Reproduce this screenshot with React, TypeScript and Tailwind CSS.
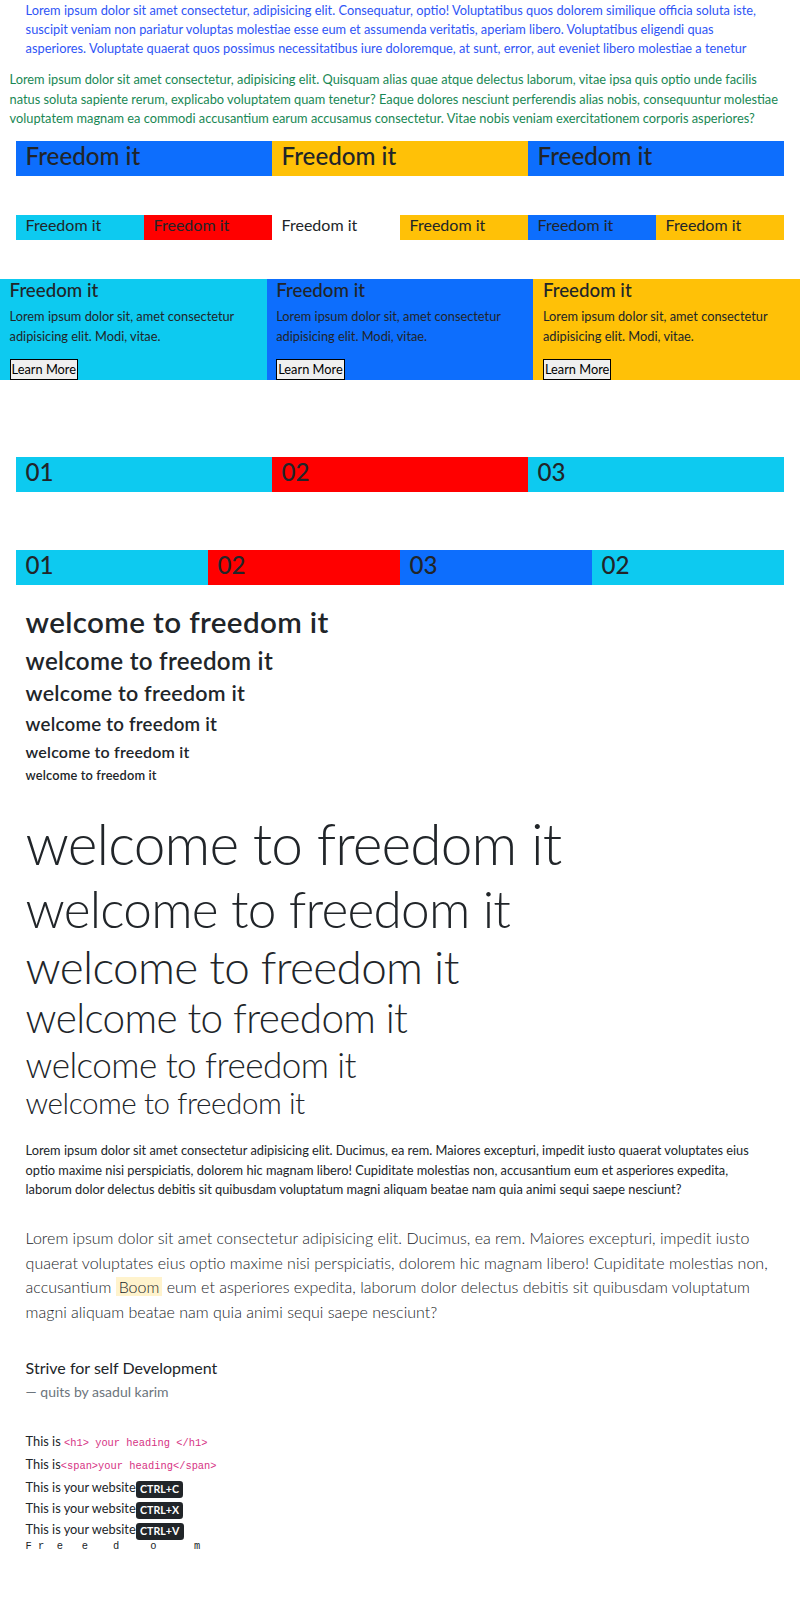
import React from "react";

// bootstrap page captured at 80% zoom, so every size is rem * 12.8px
const BLUE = "bg-[#0d6efd]";
const CYAN = "bg-[#0dcaf0]";
const YELLOW = "bg-[#ffc107]";
const RED = "bg-[#ff0000]";

const CARD_TEXT = "Lorem ipsum dolor sit, amet consectetur adipisicing elit. Modi, vitae.";

const LONG_TEXT =
  "Lorem ipsum dolor sit amet consectetur adipisicing elit. Ducimus, ea rem. Maiores excepturi, impedit iusto quaerat voluptates eius optio maxime nisi perspiciatis, dolorem hic magnam libero! Cupiditate molestias non, accusantium eum et asperiores expedita, laborum dolor delectus debitis sit quibusdam voluptatum magni aliquam beatae nam quia animi sequi saepe nesciunt?";

const headings = [
  "text-[29.6px] leading-[35.5px]",
  "text-[24.16px] leading-[29px]",
  "text-[21.44px] leading-[25.7px]",
  "text-[18.72px] leading-[22.5px]",
  "text-[16px] leading-[19.2px]",
  "text-[12.8px] leading-[15.4px]",
];

const displays = [
  "text-[56.8px] leading-[68.2px]",
  "text-[51.36px] leading-[61.6px]",
  "text-[45.92px] leading-[55.1px]",
  "text-[40.48px] leading-[48.6px]",
  "text-[35.04px] leading-[42px]",
  "text-[29.6px] leading-[35.5px]",
];

const Kbd: React.FC<{ children: React.ReactNode }> = ({ children }) => (
  <kbd className="inline-block rounded-[3.2px] bg-[#212529] px-[4.4px] text-[10.6px] font-bold leading-[17px] text-white align-middle font-['Lato','Liberation_Sans',sans-serif]">
    {children}
  </kbd>
);

const Code: React.FC<{ children: React.ReactNode }> = ({ children }) => (
  <code className="font-['Liberation_Mono',monospace] text-[10.4px] text-[#d63384]">{children}</code>
);

export default function App() {
  return (
    <div className="min-h-[1624px] bg-white pb-10 text-[12.8px] leading-[19.2px] text-[#212529] font-['Lato','Liberation_Sans',sans-serif]">
      <div className="mx-auto w-[768px] px-[9.6px] pt-px">
        <p className="mb-[11.8px] text-[#2f55f6]">
          Lorem ipsum dolor sit amet consectetur, adipisicing elit. Consequatur, optio! Voluptatibus quos dolorem
          similique officia soluta iste, suscipit veniam non pariatur voluptas molestiae esse eum et assumenda
          veritatis, aperiam libero. Voluptatibus eligendi quas asperiores. Voluptate quaerat quos possimus
          necessitatibus iure doloremque, at sunt, error, aut eveniet libero molestiae a tenetur
        </p>
      </div>
      <div className="px-[9.6px]">
        <p className="mb-[12.8px] text-[#198754]">
          Lorem ipsum dolor sit amet consectetur, adipisicing elit. Quisquam alias quae atque delectus laborum, vitae
          ipsa quis optio unde facilis natus soluta sapiente rerum, explicabo voluptatem quam tenetur? Eaque dolores
          nesciunt perferendis alias nobis, consequuntur molestiae voluptatem magnam ea commodi accusantium earum
          accusamus consectetur. Vitae nobis veniam exercitationem corporis asperiores?
        </p>
      </div>

      {/* row of three */}
      <div className="mx-auto grid w-[768px] grid-cols-3">
        {[BLUE, YELLOW, BLUE].map((bg, i) => (
          <div key={i} className={`${bg} px-[9.6px]`}>
            <h2 className="mb-[6.4px] text-[24.16px] leading-[29px] font-medium">Freedom it</h2>
          </div>
        ))}
      </div>

      {/* row of six */}
      <div className="mx-auto mt-[38.4px] grid w-[768px] grid-cols-6">
        {[CYAN, RED, "", YELLOW, BLUE, YELLOW].map((bg, i) => (
          <div key={i} className={`${bg} px-[9.6px]`}>
            <h5 className="mb-[6.4px] text-[16px] leading-[19.2px]">Freedom it</h5>
          </div>
        ))}
      </div>

      {/* cards */}
      <div className="mt-[38.4px] grid grid-cols-3">
        {[CYAN, BLUE, YELLOW].map((bg, i) => (
          <div key={i} className={`${bg} px-[9.6px]`}>
            <h4 className="mb-[6.4px] text-[18.72px] leading-[22.5px] font-medium">Freedom it</h4>
            <p className="mb-[12.8px] pr-4">{CARD_TEXT}</p>
            <button className="block border border-black bg-[#efefef] px-px text-[12.8px] leading-[19.2px] text-black">
              Learn More
            </button>
          </div>
        ))}
      </div>

      <div className="mx-auto mt-[76.8px] grid w-[768px] grid-cols-3">
        {[
          [CYAN, "01"],
          [RED, "02"],
          [CYAN, "03"],
        ].map(([bg, n]) => (
          <div key={n} className={`${bg} px-[9.6px]`}>
            <h2 className="mb-[6.4px] text-[24.16px] leading-[29px] font-medium">{n}</h2>
          </div>
        ))}
      </div>

      <div className="mx-auto mt-[57.6px] grid w-[768px] grid-cols-4">
        {[
          [CYAN, "01"],
          [RED, "02"],
          [BLUE, "03"],
          [CYAN, "02"],
        ].map(([bg, n], i) => (
          <div key={i} className={`${bg} px-[9.6px]`}>
            <h2 className="mb-[6.4px] text-[24.16px] leading-[29px] font-medium">{n}</h2>
          </div>
        ))}
      </div>

      <div className="mx-auto mt-[19px] w-[768px] px-[9.6px]">
        {headings.map((cls, i) => (
          <div key={i} className={`${cls} mb-[6.4px] font-semibold tracking-[0.012em]`}>
            welcome to freedom it
          </div>
        ))}

        <div className="mt-[26px]">
          {displays.map((cls, i) => (
            <div key={i} className={`${cls} font-light tracking-[-0.015em]`}>
              welcome to freedom it
            </div>
          ))}
        </div>

        <p className="mt-[21px] mb-[12.8px]">{LONG_TEXT}</p>

        <p className="mt-[27.5px] text-[16px] leading-[24.5px] font-light">
          Lorem ipsum dolor sit amet consectetur adipisicing elit. Ducimus, ea rem. Maiores excepturi, impedit iusto
          quaerat voluptates eius optio maxime nisi perspiciatis, dolorem hic magnam libero! Cupiditate molestias non,
          accusantium <mark className="bg-[#fff3cd] px-[3px] text-[#212529]">Boom</mark> eum et asperiores
          expedita, laborum dolor delectus debitis sit quibusdam voluptatum magni aliquam beatae nam quia animi sequi
          saepe nesciunt?
        </p>

        <blockquote className="mt-[32px]">
          <p className="text-[16px] leading-[24px]">Strive for self Development</p>
          <p className="mt-px text-[14px] leading-[21px] text-[#6c757d]">— quits by asadul karim</p>
        </blockquote>

        <div className="mt-[29px]">
          <div className="leading-[21px]">
            This is <Code>{"<h1> your heading </h1>"}</Code>
          </div>
          <div className="leading-[21px]">
            This is<Code>{"<span>your heading</span>"}</Code>
          </div>
          {["CTRL+C", "CTRL+X", "CTRL+V"].map((k) => (
            <div key={k} className="h-[21px] leading-[21px]">
              This is your website<Kbd>{k}</Kbd>
            </div>
          ))}
          <pre className="font-['Liberation_Mono',monospace] text-[10.4px] leading-[13px] whitespace-pre">
            {"F r  e   e    d     o      m"}
          </pre>
        </div>
      </div>
    </div>
  );
}
